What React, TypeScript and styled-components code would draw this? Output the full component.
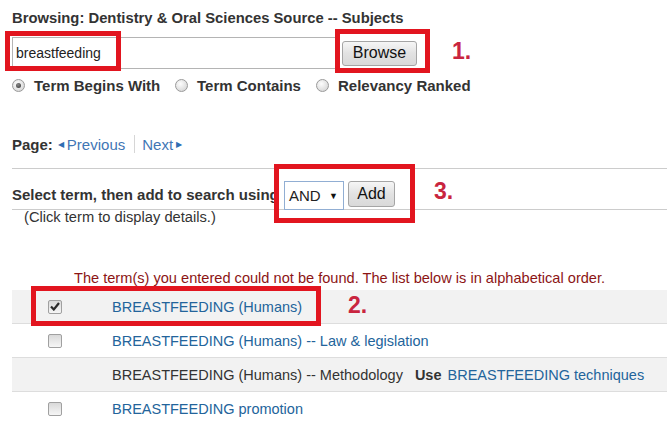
import React from "react";
import styled, { createGlobalStyle } from "styled-components";

const GlobalStyle = createGlobalStyle`
  body {
    margin: 0;
    background: #ffffff;
    font-family: "Liberation Sans", Arial, sans-serif;
    color: #333333;
    overflow: hidden;
  }
`;

const Page = styled.div`
  position: relative;
  width: 667px;
  height: 424px;
  overflow: hidden;
  padding: 10px 0 0 12px;
  box-sizing: border-box;
`;

const Title = styled.div`
  font-size: 14.8px;
  font-weight: bold;
  line-height: 16px;
  color: #333333;
`;

const SearchRow = styled.div`
  display: flex;
  align-items: center;
  gap: 6px;
  margin-top: 11px;
  height: 32px;
`;

const SearchInput = styled.input`
  width: 324px;
  height: 32px;
  box-sizing: border-box;
  border: 1px solid #b4b4b4;
  padding: 0 0 0 3px;
  font-family: "Liberation Sans", Arial, sans-serif;
  font-size: 14px;
  color: #222222;
  outline: none;
`;

const GrayButton = styled.button<{ $w: number; $h: number }>`
  width: ${(p) => p.$w}px;
  height: ${(p) => p.$h}px;
  padding: 0;
  box-sizing: border-box;
  border: 1px solid #a5a5a5;
  border-radius: 3px;
  background: linear-gradient(#f6f6f6, #e2e2e2 50%, #d9d9d9);
  font-family: "Liberation Sans", Arial, sans-serif;
  font-size: 16px;
  color: #111111;
`;

const OptionRow = styled.div`
  display: flex;
  align-items: center;
  margin-top: 8px;
  height: 16px;
`;

const Option = styled.label<{ $w: number }>`
  display: flex;
  align-items: center;
  gap: 9px;
  width: ${(p) => p.$w}px;
`;

const Radio = styled.span<{ $checked?: boolean }>`
  width: 13px;
  height: 13px;
  box-sizing: border-box;
  border-radius: 50%;
  border: 1px solid #9a9a9a;
  background: radial-gradient(circle at 40% 35%, #fdfdfd, #dcdcdc 70%, #cfcfcf);
  display: flex;
  align-items: center;
  justify-content: center;

  &::after {
    content: "";
    display: ${(p) => (p.$checked ? "block" : "none")};
    width: 5px;
    height: 5px;
    border-radius: 50%;
    background: radial-gradient(circle at 40% 35%, #888888, #333333);
  }
`;

const OptionLabel = styled.span`
  font-size: 15px;
  font-weight: bold;
  color: #333333;
`;

const PagerRow = styled.div`
  display: flex;
  align-items: center;
  margin-top: 43px;
  height: 16px;
  font-size: 15px;
`;

const PagerLabel = styled.span`
  font-weight: bold;
  margin-right: 5px;
`;

const PagerLink = styled.span`
  display: flex;
  align-items: center;
  gap: 3px;
  color: #3f76b5;
`;

const Arrow = styled.span`
  font-size: 8px;
  color: #2f6db3;
`;

const PagerDivider = styled.span`
  width: 1px;
  height: 18px;
  background: #d6d6d6;
  margin: 0 7px 0 9px;
`;

const SelectRow = styled.div`
  display: flex;
  align-items: flex-start;
  margin-top: 16px;
  height: 42px;
  box-sizing: border-box;
  padding-top: 12px;
  border-top: 1px solid #cccccc;
  border-bottom: 1px solid #cccccc;
`;

const SelectLabel = styled.span`
  margin-top: 5px;
  font-size: 15px;
  font-weight: bold;
  color: #333333;
  width: 272px;
  overflow: hidden;
  white-space: nowrap;
`;

const SelectBox = styled.div`
  display: flex;
  align-items: center;
  justify-content: space-between;
  width: 60px;
  height: 29px;
  box-sizing: border-box;
  padding: 0 5px 0 4px;
  margin-right: 4px;
  border: 1px solid #91aed3;
  background: #ffffff;
  font-size: 15px;
  color: #222222;
`;

const SelectArrow = styled.span`
  font-size: 9px;
  color: #111111;
`;

const Hint = styled.div`
  margin-left: 12px;
  font-size: 14.7px;
  line-height: 14px;
  color: #333333;
`;

const Notice = styled.div`
  margin: 46px 0 0 62px;
  font-size: 14.6px;
  line-height: 16px;
  color: #8c1515;
  white-space: nowrap;
`;

const TermList = styled.div`
  margin-top: 4px;
`;

const TermRow = styled.div<{ $shaded?: boolean }>`
  display: flex;
  align-items: center;
  height: 34px;
  box-sizing: border-box;
  border-bottom: 1px solid #dddddd;
  background: ${(p) => (p.$shaded ? "#f2f2f2" : "#ffffff")};
  font-size: 14.5px;
  white-space: nowrap;
`;

const CheckCell = styled.div`
  width: 100px;
  padding-left: 36px;
  box-sizing: border-box;
  display: flex;
  align-items: center;
`;

const Check = styled.span`
  width: 14px;
  height: 14px;
  box-sizing: border-box;
  border: 1px solid #a0a0a0;
  border-radius: 2px;
  background: linear-gradient(#d9d9d9, #f6f6f6);
  display: flex;
  align-items: center;
  justify-content: center;
`;

const TermLink = styled.span`
  color: #23649b;
`;

const TermText = styled.span`
  color: #333333;
`;

const UseWord = styled.span`
  font-weight: bold;
  color: #333333;
  margin: 0 6px 0 12px;
`;

const Callout = styled.div<{ $x: number; $y: number; $w: number; $h: number }>`
  position: absolute;
  left: ${(p) => p.$x}px;
  top: ${(p) => p.$y}px;
  width: ${(p) => p.$w}px;
  height: ${(p) => p.$h}px;
  box-sizing: border-box;
  border: 5px solid #e2151f;
  pointer-events: none;
`;

const StepNumber = styled.div<{ $x: number; $y: number }>`
  position: absolute;
  left: ${(p) => p.$x}px;
  top: ${(p) => p.$y}px;
  font-size: 23px;
  line-height: 23px;
  font-weight: bold;
  color: #c9253f;
`;

const CheckMark = () => (
  <svg width="10" height="9" viewBox="0 0 10 9">
    <path d="M1 4.5 L3.8 7.5 L9 1" fill="none" stroke="#2b2b2b" strokeWidth="2.2" />
  </svg>
);

const App = (): JSX.Element => {
  return (
    <>
      <GlobalStyle />
      <Page>
        <Title>Browsing: Dentistry &amp; Oral Sciences Source -- Subjects</Title>
        <SearchRow>
          <SearchInput value="breastfeeding" readOnly />
          <GrayButton $w={75} $h={25}>
            Browse
          </GrayButton>
        </SearchRow>
        <OptionRow>
          <Option $w={163}>
            <Radio $checked />
            <OptionLabel>Term Begins With</OptionLabel>
          </Option>
          <Option $w={141}>
            <Radio />
            <OptionLabel>Term Contains</OptionLabel>
          </Option>
          <Option $w={180}>
            <Radio />
            <OptionLabel>Relevancy Ranked</OptionLabel>
          </Option>
        </OptionRow>
        <PagerRow>
          <PagerLabel>Page:</PagerLabel>
          <PagerLink>
            <Arrow>◀</Arrow>Previous
          </PagerLink>
          <PagerDivider />
          <PagerLink>
            Next<Arrow>▶</Arrow>
          </PagerLink>
        </PagerRow>
        <SelectRow>
          <SelectLabel>Select term, then add to search using</SelectLabel>
          <SelectBox>
            AND<SelectArrow>▼</SelectArrow>
          </SelectBox>
          <GrayButton $w={47} $h={26}>
            Add
          </GrayButton>
        </SelectRow>
        <Hint>(Click term to display details.)</Hint>
        <Notice>
          The term(s) you entered could not be found. The list below is in alphabetical order.
        </Notice>
        <TermList>
          <TermRow $shaded>
            <CheckCell>
              <Check>
                <CheckMark />
              </Check>
            </CheckCell>
            <TermLink>BREASTFEEDING (Humans)</TermLink>
          </TermRow>
          <TermRow>
            <CheckCell>
              <Check />
            </CheckCell>
            <TermLink>BREASTFEEDING (Humans) -- Law &amp; legislation</TermLink>
          </TermRow>
          <TermRow $shaded>
            <CheckCell />
            <TermText>BREASTFEEDING (Humans) -- Methodology</TermText>
            <UseWord>Use</UseWord>
            <TermLink>BREASTFEEDING techniques</TermLink>
          </TermRow>
          <TermRow>
            <CheckCell>
              <Check />
            </CheckCell>
            <TermLink>BREASTFEEDING promotion</TermLink>
          </TermRow>
        </TermList>

        <Callout $x={5} $y={31} $w={116} $h={40} />
        <Callout $x={335} $y={29} $w={95} $h={44} />
        <Callout $x={274} $y={164} $w={141} $h={59} />
        <Callout $x={31} $y={286} $w={290} $h={40} />
        <StepNumber $x={452} $y={40}>1.</StepNumber>
        <StepNumber $x={434} $y={180}>3.</StepNumber>
        <StepNumber $x={348} $y={294}>2.</StepNumber>
      </Page>
    </>
  );
};

export default App;
